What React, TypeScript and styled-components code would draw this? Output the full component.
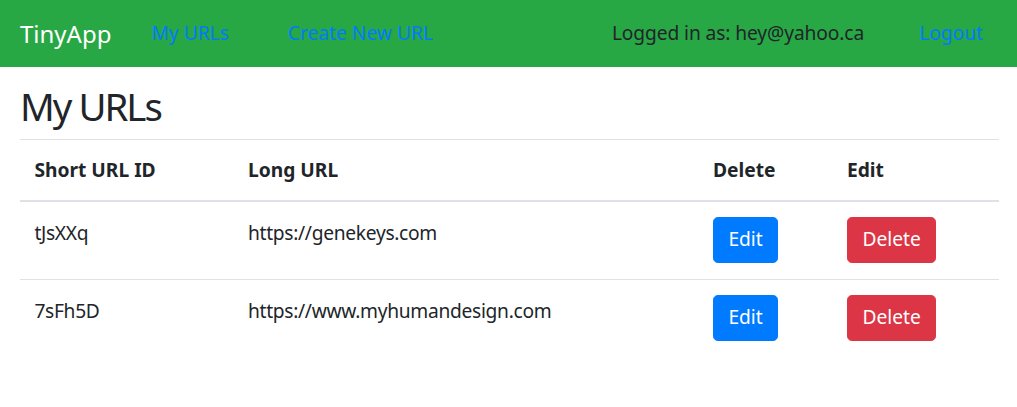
import React from "react";
import styled, { createGlobalStyle } from "styled-components";

const GlobalStyle = createGlobalStyle`
  html, body { margin: 0; padding: 0; background: #fff; }
  body {
    font-family: "Noto Sans", "Open Sans", sans-serif;
    font-size: 19.2px;
    line-height: 1.5;
    color: #212529;
  }
  * { box-sizing: border-box; }
`;

const Navbar = styled.nav`
  display: flex;
  align-items: center;
  height: 67px;
  padding: 0 34px 0 20px;
  background: #28a745;
`;

const Brand = styled.a`
  font-size: 24px;
  line-height: 36px;
  color: #fff;
  text-decoration: none;
`;

const NavLink = styled.a<{ $gap: number }>`
  margin-left: ${(p) => p.$gap}px;
  color: #007bff;
  text-decoration: none;
  font-size: 19.2px;
`;

const RightGroup = styled.div`
  margin-left: auto;
  display: flex;
  align-items: center;
`;

const UserText = styled.span`
  color: #212529;
  letter-spacing: -0.1px;
`;

const Main = styled.main`
  padding: 16px 18px 0 20px;
`;

const Title = styled.h2`
  margin: 0 0 9.6px;
  font-size: 38.4px;
  font-weight: 400;
  line-height: 1.2;
  letter-spacing: -2px;
`;

const Table = styled.table`
  width: 100%;
  border-collapse: collapse;
  table-layout: fixed;
`;

const Th = styled.th`
  text-align: left;
  font-weight: 700;
  padding: 16px 14.4px 15.2px;
  border-top: 1px solid #dee2e6;
  border-bottom: 2px solid #dee2e6;
  vertical-align: bottom;
`;

const Td = styled.td<{ $top: number }>`
  padding: ${(p) => p.$top}px 14.4px 15.6px;
  border-top: 1px solid #dee2e6;
  vertical-align: top;
  letter-spacing: -0.3px;
`;

const Button = styled.button<{ $variant: "primary" | "danger" }>`
  display: block;
  font-family: inherit;
  font-size: 19.2px;
  line-height: 28.8px;
  padding: 7.8px 14.4px;
  border-radius: 4.8px;
  border: 1.2px solid ${(p) => (p.$variant === "primary" ? "#007bff" : "#dc3545")};
  background: ${(p) => (p.$variant === "primary" ? "#007bff" : "#dc3545")};
  color: #fff;
  cursor: pointer;
`;

const urls = [
  { id: "tJsXXq", long: "https://genekeys.com" },
  { id: "7sFh5D", long: "https://www.myhumandesign.com" },
];

export default function App() {
  return (
    <>
      <GlobalStyle />
      <Navbar>
        <Brand href="#">TinyApp</Brand>
        <NavLink $gap={40} href="#">My URLs</NavLink>
        <NavLink $gap={59} href="#">Create New URL</NavLink>
        <RightGroup>
          <UserText>Logged in as: hey@yahoo.ca</UserText>
          <NavLink $gap={55} href="#">Logout</NavLink>
        </RightGroup>
      </Navbar>
      <Main>
        <Title>My URLs</Title>
        <Table>
          <colgroup>
            <col style={{ width: 213.6 }} />
            <col style={{ width: 465 }} />
            <col style={{ width: 134 }} />
            <col />
          </colgroup>
          <thead>
            <tr>
              <Th>Short URL ID</Th>
              <Th>Long URL</Th>
              <Th>Delete</Th>
              <Th>Edit</Th>
            </tr>
          </thead>
          <tbody>
            {urls.map((u) => (
              <tr key={u.id}>
                <Td $top={17}>{u.id}</Td>
                <Td $top={17}>{u.long}</Td>
                <Td $top={15}>
                  <Button $variant="primary">Edit</Button>
                </Td>
                <Td $top={15}>
                  <Button $variant="danger">Delete</Button>
                </Td>
              </tr>
            ))}
          </tbody>
        </Table>
      </Main>
    </>
  );
}
